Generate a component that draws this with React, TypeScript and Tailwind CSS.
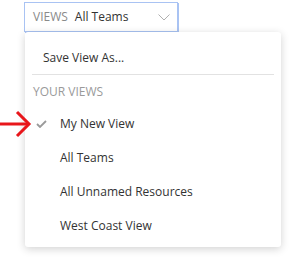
import React from 'react';

const items = ['My New View', 'All Teams', 'All Unnamed Resources', 'West Coast View'];

const App: React.FC = () => {
  return (
    <div className="relative w-[303px] h-[270px] bg-white overflow-hidden font-['Open_Sans',sans-serif] text-[12px]">
      <div className="pl-[24px] pt-[2px]">
        {/* Views select */}
        <div className="w-[154px] h-[30px] flex items-center justify-between pl-[8px] pr-[6px] border border-[#a9c3f3] shadow-[1px_1px_0_#a9c3f3] bg-white">
          <div className="flex items-center whitespace-nowrap">
            <span className="text-[#8a8a8a]">VIEWS</span>
            <span className="ml-[7px] text-[#333]">All Teams</span>
          </div>
          <svg width="12" height="7" viewBox="0 0 12 7" className="mr-[1px]">
            <path d="M0.5 0.5 L6 6 L11.5 0.5" fill="none" stroke="#b0b0b0" strokeWidth="1" />
          </svg>
        </div>

        {/* Menu */}
        <div className="ml-[1px] w-[256px] bg-white rounded-[3px] shadow-[0_2px_8px_rgba(0,0,0,0.18)] pt-[16px] pb-[4px]">
          <div className="pl-[18px] leading-[20px] text-[#333]">Save View As...</div>
          <div className="mx-[7px] mt-[6px] h-px bg-[#e2e2e2]" />
          <div className="pl-[8px] mt-[7px] leading-[20px] text-[#9a9a9a]">YOUR VIEWS</div>
          <div className="mt-[5px]">
            {items.map((it, i) => (
              <div key={it} className="h-[34px] flex items-center text-[#333]">
                <div className="w-[35px] flex justify-end pr-[13px]">
                  {i === 0 && (
                    <svg width="11" height="8" viewBox="0 0 11 8">
                      <path d="M1 4 L4 7 L10 1" fill="none" stroke="#9a9a9a" strokeWidth="1.8" />
                    </svg>
                  )}
                </div>
                <span>{it}</span>
              </div>
            ))}
          </div>
        </div>
      </div>

      {/* Red arrow */}
      <svg className="absolute left-0 top-[110px]" width="32" height="28" viewBox="0 0 32 28">
        <path d="M0 14 L29 14" stroke="#e8161b" strokeWidth="3" />
        <path d="M17 2 L29 14 L17 26" fill="none" stroke="#e8161b" strokeWidth="3" />
      </svg>
    </div>
  );
};

export default App;
